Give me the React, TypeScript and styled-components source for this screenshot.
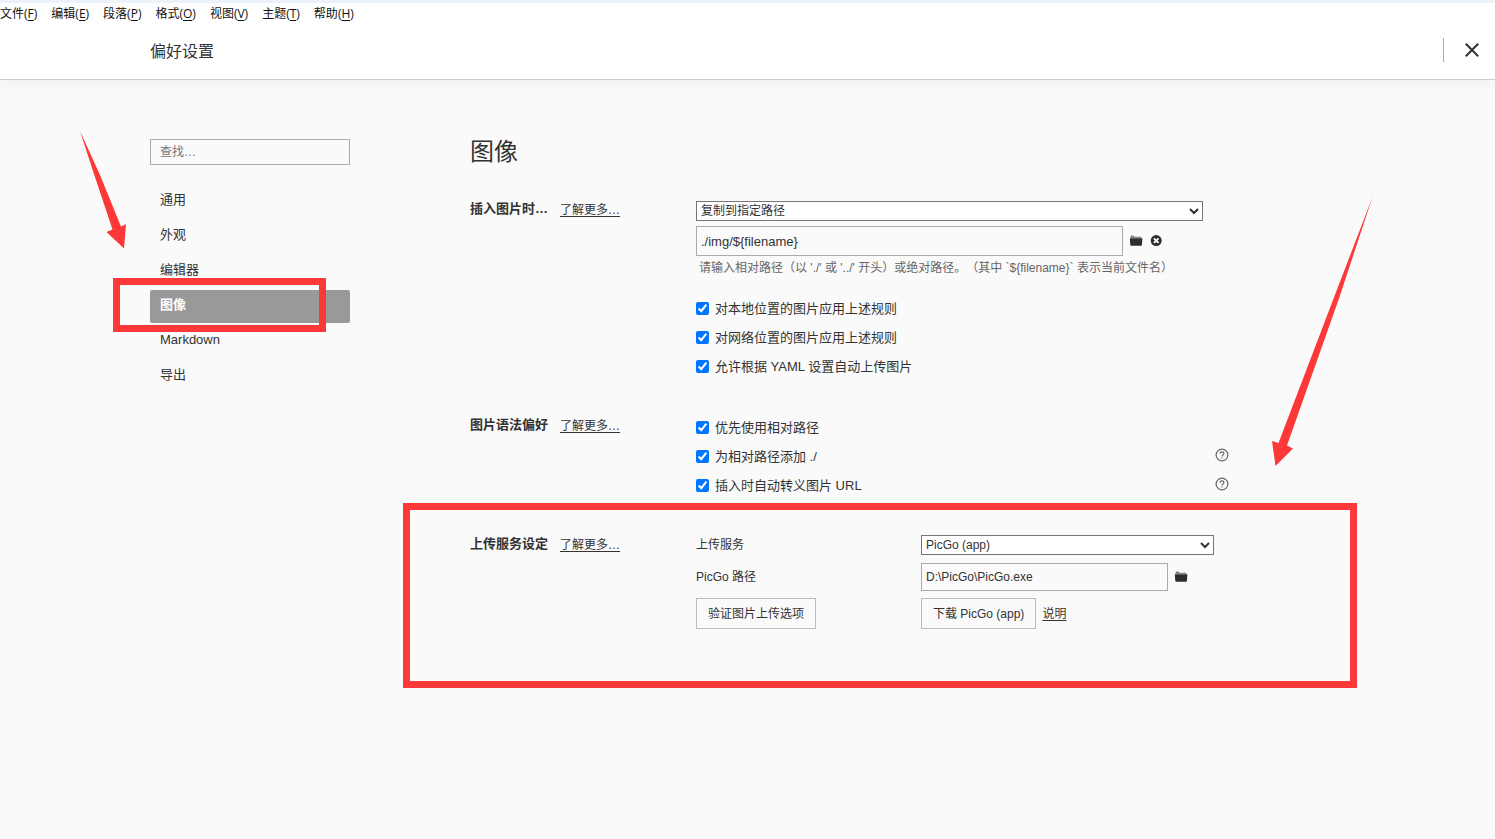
import React from "react";
import styled, { createGlobalStyle } from "styled-components";

const GlobalStyle = createGlobalStyle`
  * { box-sizing: border-box; }
  body {
    margin: 0;
    background: #fafafa;
    color: #333;
    font-family: "Liberation Sans", "Noto Sans CJK SC", sans-serif;
    font-size: 13px;
    line-height: 16px;
    text-spacing-trim: space-all;
  }
  button, input, select { font-family: inherit; color: inherit; }
`;

const MARK = "#fd3838";

const Top = styled.div`
  background: #fff;
  border-top: 3px solid #edf2f9;
  border-bottom: 1px solid #ccc;
  box-shadow: 0 2px 20px rgba(0, 0, 0, 0.05);
`;

const MenuBar = styled.nav`
  display: flex;
  gap: 14px;
  height: 22px;
`;

const MenuButton = styled.button`
  border: 0;
  padding: 0;
  background: none;
  color: #111;
  font-family: "Open Sans", "Noto Sans CJK SC", sans-serif;
  font-size: 12px;
  line-height: 22px;
  white-space: nowrap;

  u { text-underline-offset: 2px; }
`;

const Header = styled.header`
  display: flex;
  align-items: center;
  justify-content: space-between;
  height: 54px;
  padding: 0 15px 4px 150px;
`;

const Title = styled.h1`
  margin: 0;
  padding-top: 4px;
  font-size: 16px;
  font-weight: 400;
  line-height: 24px;
`;

const CloseArea = styled.div`
  display: flex;
  align-items: center;
  height: 24px;
  padding-left: 20px;
  border-left: 1px solid #aaa;
`;

const IconButton = styled.button`
  display: flex;
  border: 0;
  padding: 0;
  background: none;
  color: #333;
`;

const Body = styled.div`
  display: flex;
  gap: 120px;
  padding: 52px 150px 60px;
`;

const Sidebar = styled.aside`
  position: relative;
  flex: 0 0 200px;
  padding-top: 7px;
`;

const Search = styled.input`
  display: block;
  width: 100%;
  height: 26px;
  margin-bottom: 20px;
  padding: 0 9px;
  border: 1px solid #aaa;
  background: transparent;
  font-size: 12px;

  &::placeholder { color: #757575; }
`;

const NavList = styled.ul`
  display: flex;
  flex-direction: column;
  gap: 2px;
  margin: 0;
  padding: 0;
  list-style: none;
`;

const NavItem = styled.li`
  position: relative;
`;

const NavLink = styled.a<{ $active?: boolean }>`
  display: block;
  height: 33px;
  padding: 0 10px;
  border-radius: 2px;
  background: ${(p) => (p.$active ? "#999" : "transparent")};
  color: ${(p) => (p.$active ? "#fff" : "#333")};
  font-weight: ${(p) => (p.$active ? 700 : 400)};
  line-height: 30px;
  text-decoration: none;
`;

const Main = styled.main`
  flex: 0 1 760px;
  min-width: 0;
`;

const Heading = styled.h2`
  margin: 0 0 25px;
  font-size: 24px;
  font-weight: 400;
  line-height: 40px;
`;

const Section = styled.section`
  position: relative;
  display: grid;
  grid-template-columns: 226px 1fr;
  margin-bottom: 32px;
`;

const SectionHead = styled.div`
  display: flex;
  gap: 12px;
  padding-top: 4px;
`;

const SectionTitle = styled.h3`
  margin: 0;
  font-size: 13px;
  font-weight: 700;
  line-height: 16px;
`;

const Link = styled.a`
  color: #333;
  font-size: 12px;
  line-height: 18px;
  text-underline-offset: 2px;
`;

const InsertFields = styled.div`
  padding: 4px 27px 18px 0;
`;

const Select = styled.select`
  display: block;
  width: 100%;
  height: 20px;
  padding: 0;
  border: 1px solid #767676;
  border-radius: 0;
  background: #fff;
  font-size: 12px;
`;

const PathRow = styled.div<{ $top?: number }>`
  display: flex;
  align-items: center;
  margin-top: ${(p) => p.$top ?? 0}px;
`;

const PathInput = styled.input<{ $height: number; $size: number }>`
  flex: 1;
  min-width: 0;
  height: ${(p) => p.$height}px;
  padding: 0 5px 0 4px;
  border: 1px solid #aaa;
  background: transparent;
  font-size: ${(p) => p.$size}px;
`;

const PathActions = styled.div<{ $width: number }>`
  display: flex;
  gap: 7px;
  width: ${(p) => p.$width}px;
  padding-left: 6px;
`;

const Hint = styled.p`
  margin: 4px 0 0;
  padding-left: 3px;
  color: #666;
  font-size: 12px;
  line-height: 16px;
  white-space: nowrap;
`;

const CheckRow = styled.div`
  display: flex;
  align-items: center;
  justify-content: space-between;
  height: 29px;
  padding-right: 1px;

  ${IconButton} { padding-bottom: 4px; }
`;

const CheckLabel = styled.label`
  display: flex;
  align-items: center;
  gap: 6px;

  input { width: 13px; height: 13px; margin: 0; accent-color: #0075ff; }
`;

const UploadGrid = styled.div`
  display: grid;
  grid-template-columns: 225px 1fr;
  grid-template-rows: 22px 28px 31px;
  row-gap: 7px;
  align-items: center;
  padding: 2px 16px 0 0;
`;

const FieldLabel = styled.label`
  font-size: 12px;
  line-height: 16px;
`;

const ButtonRow = styled.div`
  display: flex;
  align-items: center;
  gap: 6px;
`;

const Button = styled.button`
  height: 31px;
  padding: 0 11px 3px;
  border: 1px solid #bbb;
  background: transparent;
  font-size: 12px;
  white-space: nowrap;
`;

const NavMark = styled.div`
  position: absolute;
  top: -12px;
  left: -37px;
  width: 213px;
  height: 54px;
  border: 7px solid ${MARK};
  pointer-events: none;
`;

const SectionMark = styled.div`
  position: absolute;
  inset: -29px -127px auto -67px;
  height: 185px;
  border: 7px solid ${MARK};
  pointer-events: none;
`;

const NavArrow = styled.svg`
  position: absolute;
  top: -2px;
  left: -72px;
  pointer-events: none;
`;

const SectionArrow = styled.svg`
  position: absolute;
  top: -336px;
  right: -144px;
  pointer-events: none;
`;

const FolderIcon = () => (
  <svg width="14" height="12" viewBox="0 0 14 12" aria-hidden="true">
    <path d="M1.6 2.9V1.4H5.4L5.9 1.8H11.8Q12.4 1.8 12.5 2.9Z" fill="#888" />
    <path d="M1.5 1.5Q1.6.7 2.3.7H4.6L5.4 1.6Z" fill="#333" />
    <path d="M.8 3.2H13.4L12.9 10.1Q12.8 10.8 12.1 10.8H2.1Q1.4 10.8 1.3 10.1Z" fill="#2d2d2d" />
  </svg>
);

const ClearIcon = () => (
  <svg width="12" height="12" viewBox="0 0 12 12" aria-hidden="true">
    <circle cx="6.2" cy="5.6" r="5.5" fill="#2d2d2d" />
    <path d="M3.9 3.3l4.6 4.6M8.5 3.3l-4.6 4.6" stroke="#fff" strokeWidth="1.8" />
  </svg>
);

const HelpIcon = () => (
  <svg width="14" height="14" viewBox="0 0 14 14" fill="none" stroke="#666" aria-hidden="true">
    <circle cx="7" cy="7" r="5.9" strokeWidth="1.2" />
    <path d="M5.1 5.7Q5.1 3.9 7 3.9T8.9 5.5Q8.9 6.3 7.9 7Q7 7.6 7 8.5" strokeWidth="1.2" />
    <path d="M7 9.4V10.6" strokeWidth="1.2" />
  </svg>
);

const menus = [
  ["文件", "F"],
  ["编辑", "E"],
  ["段落", "P"],
  ["格式", "O"],
  ["视图", "V"],
  ["主题", "T"],
  ["帮助", "H"],
];

const navItems = ["通用", "外观", "编辑器", "图像", "Markdown", "导出"];

function Check({ text, help }: { text: string; help?: boolean }) {
  return (
    <CheckRow>
      <CheckLabel>
        <input type="checkbox" defaultChecked />
        {text}
      </CheckLabel>
      {help && (
        <IconButton type="button" aria-label="帮助">
          <HelpIcon />
        </IconButton>
      )}
    </CheckRow>
  );
}

function SectionLabel({ text }: { text: string }) {
  return (
    <SectionHead>
      <SectionTitle>{text}</SectionTitle>
      <Link href="#more">了解更多…</Link>
    </SectionHead>
  );
}

export default function App() {
  return (
    <>
      <GlobalStyle />
      <Top>
        <MenuBar>
          {menus.map(([name, key]) => (
            <MenuButton type="button" key={key}>
              {name}(<u>{key}</u>)
            </MenuButton>
          ))}
        </MenuBar>
        <Header>
          <Title>偏好设置</Title>
          <CloseArea>
            <IconButton type="button" aria-label="关闭">
              <svg width="16" height="16" viewBox="0 0 16 16" stroke="#333" strokeWidth="2" aria-hidden="true">
                <path d="M1.8 1.8L14.2 14.2M14.2 1.8L1.8 14.2" />
              </svg>
            </IconButton>
          </CloseArea>
        </Header>
      </Top>
      <Body>
        <Sidebar>
          <Search type="search" placeholder="查找…" aria-label="查找" />
          <NavList>
            {navItems.map((name) => (
              <NavItem key={name}>
                <NavLink href="#" $active={name === "图像"}>
                  {name}
                </NavLink>
                {name === "图像" && <NavMark />}
              </NavItem>
            ))}
          </NavList>
          <NavArrow width="50" height="120" aria-hidden="true">
            <path d="M2 1L22 45L43 96.5L48 94L46 118.5L28.5 102L34.5 99.5L15 41Z" fill={MARK} />
          </NavArrow>
        </Sidebar>
        <Main>
          <Heading>图像</Heading>
          <Section>
            <SectionLabel text="插入图片时…" />
            <div>
              <InsertFields>
                <Select aria-label="插入图片时">
                  <option>复制到指定路径</option>
                </Select>
                <PathRow $top={5}>
                  <PathInput $height={30} $size={13} aria-label="图片路径" defaultValue="./img/${filename}" />
                  <PathActions $width={80}>
                    <IconButton type="button" aria-label="选择文件夹">
                      <FolderIcon />
                    </IconButton>
                    <IconButton type="button" aria-label="清除">
                      <ClearIcon />
                    </IconButton>
                  </PathActions>
                </PathRow>
                <Hint>
                  {"请输入相对路径（以 './' 或 '../' 开头）或绝对路径。（其中 `${filename}` 表示当前文件名）"}
                </Hint>
              </InsertFields>
              <Check text="对本地位置的图片应用上述规则" />
              <Check text="对网络位置的图片应用上述规则" />
              <Check text="允许根据 YAML 设置自动上传图片" />
            </div>
          </Section>
          <Section>
            <SectionLabel text="图片语法偏好" />
            <div>
              <Check text="优先使用相对路径" />
              <Check text="为相对路径添加 ./" help />
              <Check text="插入时自动转义图片 URL" help />
            </div>
          </Section>
          <Section>
            <SectionLabel text="上传服务设定" />
            <UploadGrid>
              <FieldLabel htmlFor="service">上传服务</FieldLabel>
              <Select id="service">
                <option>PicGo (app)</option>
              </Select>
              <FieldLabel htmlFor="picgo-path">PicGo 路径</FieldLabel>
              <PathRow>
                <PathInput id="picgo-path" $height={28} $size={12} defaultValue="D:\PicGo\PicGo.exe" />
                <PathActions $width={46}>
                  <IconButton type="button" aria-label="选择文件夹">
                    <FolderIcon />
                  </IconButton>
                </PathActions>
              </PathRow>
              <div>
                <Button type="button">验证图片上传选项</Button>
              </div>
              <ButtonRow>
                <Button type="button">下载 PicGo (app)</Button>
                <Link href="#help">说明</Link>
              </ButtonRow>
            </UploadGrid>
            <SectionMark />
            <SectionArrow width="104" height="272" viewBox="1270 196 104 272" aria-hidden="true">
              <path d="M1372.5 197L1339.5 297L1287 445.5L1293 448.5L1275.5 466L1272 441L1278.5 443L1333 300Z" fill={MARK} />
            </SectionArrow>
          </Section>
        </Main>
      </Body>
    </>
  );
}
